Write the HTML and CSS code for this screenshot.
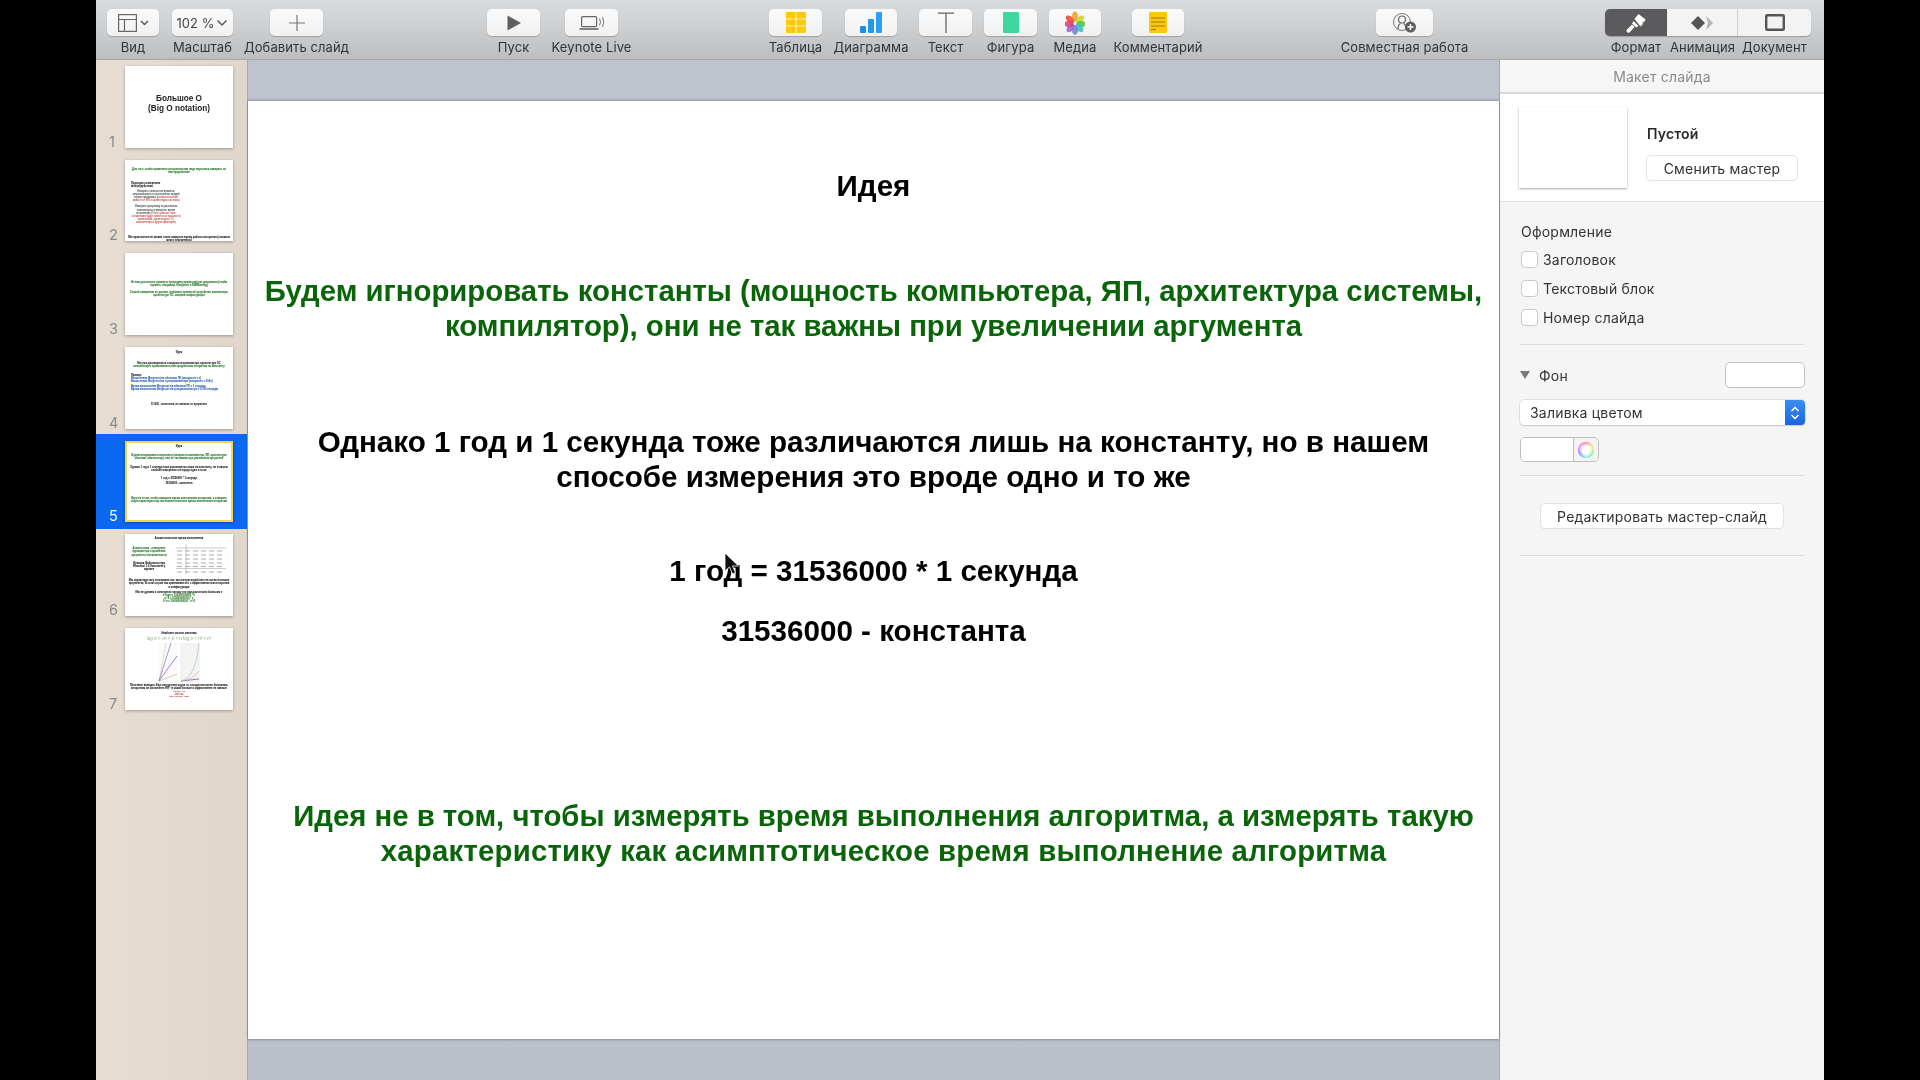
FILE: index.html
```html
<!DOCTYPE html>
<html lang="ru">
<head>
<meta charset="utf-8">
<title>Keynote</title>
<link rel="stylesheet" href="styles.css">
</head>
<body>
<div class="app">
  <header class="toolbar">
    <div class="tool w52 first"><div class="btn"><svg width="36" height="20" viewBox="0 0 36 20"><g fill="none" stroke="#666" stroke-width="1.2"><rect x="3.6" y="1.6" width="17.8" height="16.8"/><path d="M3.6 6.5h17.8M9.5 6.5v12"/></g><path d="M26 8l3.5 3.5L33 8" fill="none" stroke="#555" stroke-width="1.4"/></svg></div><span class="lbl">Вид</span></div>
    <div class="tool w61 m13"><div class="btn zoomtxt">102 %<svg width="12" height="8" viewBox="0 0 12 8"><path d="M1.5 1.5L6 6l4.5-4.5" fill="none" stroke="#555" stroke-width="1.4"/></svg></div><span class="lbl">Масштаб</span></div>
    <div class="tool w53 m37"><div class="btn"><svg width="20" height="20" viewBox="0 0 20 20"><path d="M10 2v16M2 10h16" stroke="#777" stroke-width="1.2"/></svg></div><span class="lbl">Добавить слайд</span></div>
    <div class="tool w53 m164"><div class="btn"><svg width="16" height="18" viewBox="0 0 16 18"><path d="M1.5 1.5L15 9 1.5 16.5z" fill="#5f5f5f"/></svg></div><span class="lbl">Пуск</span></div>
    <div class="tool w53 m25"><div class="btn"><svg width="28" height="18" viewBox="0 0 28 18"><rect x="3.6" y="2.6" width="15" height="10" rx="1" fill="none" stroke="#666" stroke-width="1.2"/><path d="M1.5 15h19" stroke="#666" stroke-width="1.6"/><path d="M21.5 4.5q2 3.5 0 7M24.5 3q2.6 5 0 10" fill="none" stroke="#777" stroke-width="1"/></svg></div><span class="lbl">Keynote Live</span></div>
    <div class="tool w53 m151"><div class="btn"><svg width="20" height="21" viewBox="0 0 20 21"><rect width="20" height="21" rx="1" fill="#fdc90f"/><path d="M0 7h20M0 14h20M10 0v21" stroke="#fff2b5" stroke-width="1"/></svg></div><span class="lbl">Таблица</span></div>
    <div class="tool w52 m23"><div class="btn"><svg width="22" height="21" viewBox="0 0 22 21"><rect x="0" y="14" width="6" height="7" rx="1" fill="#1a8ee8"/><rect x="8" y="7" width="6" height="14" rx="1" fill="#2497ef"/><rect x="16" y="0" width="6" height="21" rx="1" fill="#2b9ff5"/></svg></div><span class="lbl">Диаграмма</span></div>
    <div class="tool w53 m22"><div class="btn"><svg width="18" height="21" viewBox="0 0 18 21"><path d="M1 1.2h16M9 1.2V21" stroke="#666" stroke-width="1.3"/></svg></div><span class="lbl">Текст</span></div>
    <div class="tool w53 m12"><div class="btn"><svg width="16" height="21" viewBox="0 0 16 21"><rect width="16" height="21" rx="1" fill="#3ed79d"/></svg></div><span class="lbl">Фигура</span></div>
    <div class="tool w52 m12"><div class="btn"><svg width="20" height="24" viewBox="-10 -12 20 24"><g fill-opacity=".88"><ellipse cy="-6.5" rx="3" ry="5" fill="#f0a020"/><ellipse cx="5" cy="-3.5" rx="3" ry="5" transform="rotate(50 5 -3.5)" fill="#c8d42a"/><ellipse cx="6" cy="1" rx="3" ry="4.5" transform="rotate(90 6 1)" fill="#58c04a"/><ellipse cx="4.5" cy="5" rx="3" ry="5" transform="rotate(140 4.5 5)" fill="#3cc0c0"/><ellipse cy="7" rx="3" ry="5" fill="#6a84d8"/><ellipse cx="-4.5" cy="5" rx="3" ry="5" transform="rotate(40 -4.5 5)" fill="#a060c8"/><ellipse cx="-6" cy="1" rx="3" ry="4.5" transform="rotate(90 -6 1)" fill="#d8408a"/><ellipse cx="-5" cy="-3.5" rx="3" ry="5" transform="rotate(-50 -5 -3.5)" fill="#e84838"/></g></svg></div><span class="lbl">Медиа</span></div>
    <div class="tool w52 m31"><div class="btn"><svg width="18" height="21" viewBox="0 0 18 21"><rect width="18" height="21" rx="1" fill="#fdc70c"/><path d="M2 6h14M2 10h14M2 14h14M2 17.500h5" stroke="#9a7a1a" stroke-width="1"/></svg></div><span class="lbl">Комментарий</span></div>
    <div class="tool w57 m192"><div class="btn"><svg width="24" height="22" viewBox="0 0 24 22"><circle cx="9" cy="10" r="8.500" fill="none" stroke="#777" stroke-width="1"/><circle cx="9" cy="7.500" r="3.500" fill="none" stroke="#666" stroke-width="1.2"/><path d="M5 17.500q0-5 2.500-6M13 17.500q0-5-2.500-6" fill="none" stroke="#666" stroke-width="1.2"/><circle cx="17.500" cy="15" r="5.500" fill="#5d5d5d"/><path d="M17.500 12v6M14.500 15h6" stroke="#fff" stroke-width="1.4"/></svg></div><span class="lbl">Совместная работа</span></div>
    <div class="segs">
      <div class="tool w62"><div class="btn seg seg-on"><svg width="20" height="20" viewBox="0 0 20 20"><path d="M8.500 6l4-5 7 5.500-1.500 3-1.500-1 .5 2.500-2.500 2.500z" fill="#fff"/><path d="M7.500 8l5 5-2.500 1.500-4-4z" fill="#fff"/><path d="M6 11.500l2.500 2.500-4.500 5a1.900 1.900 0 0 1-3-2.500z" fill="#fff"/></svg></div><span class="lbl">Формат</span></div>
      <div class="tool w71"><div class="btn seg seg-mid"><svg width="22" height="14" viewBox="0 0 22 14"><path d="M7 0l7 7-7 7-7-7z" fill="#555"/><path d="M15 0l7 7-7 7 2-7z" fill="#b4b4b4"/></svg></div><span class="lbl">Анимация</span></div>
      <div class="tool w73"><div class="btn seg seg-end"><svg width="20" height="17" viewBox="0 0 20 17"><rect x="1.200" y="1.200" width="17.600" height="14.600" rx="1" fill="none" stroke="#555" stroke-width="2.400"/></svg></div><span class="lbl">Документ</span></div>
    </div>
  </header>

  <div class="main">
    <aside class="sidebar">
      <div class="row"><span class="num">1</span><div class="thumb t1"><p>Большое О</p><p>(Big O notation)</p></div></div>

      <div class="row"><span class="num">2</span><div class="thumb tx">
        <p class="g c mt8">Для того, чтобы применять алгоритмы нам надо научиться измерять их быстродействие</p>
        <div class="half mt8">
          <p class="k">Подходы к измерению быстродействия</p>
          <p class="n c mt2">Измерить количество времени, затрачиваемое на выполнение каждой строки программы <span class="r">(разные значения зависят от ЯП и архитектуры системы)</span></p>
          <p class="n c mt3">Измерить программу на различных компьютерах и измерить время исполнения <span class="r">(Опять разные типы алгоритмов будут зависеть от мощности компьютера, архитектуры ОС, компилятора и других факторов)</span></p>
        </div>
        <p class="k c mt12">Мы практически не можем точно измерить время работы алгоритма (слишком много переменных)</p>
      </div></div>

      <div class="row"><span class="num">3</span><div class="thumb tx">
        <p class="g c mt28">Но нам достаточно сравнить программу время работы программы (чтобы оценить, например, Mergesort и SMBSorting)</p>
        <p class="g c mt3">Способ измерения не должен требовать знания об устройстве компьютера, архитектуре ОС, мощной конфигурации</p>
      </div></div>

      <div class="row"><span class="num">4</span><div class="thumb tx">
        <p class="k c mt4">Идея</p>
        <p class="k c mt8">Мы уже договорились о мощности компьютера, архитектуре ОС</p>
        <p class="g c">компилятор и применяемого быстродействия алгоритма на константу</p>
        <p class="k mt6 lft">Пример:</p>
        <p class="b lft">Вычисление Mergesort на обычном ПК (мощность = x)</p>
        <p class="b lft">Вычисление Mergesort на суперкомпьютере (мощность = 100x)</p>
        <p class="b lft mt1">Время вычисления Mergesort на обычном ПК = 1 секунда</p>
        <p class="b lft">Время вычисления Mergesort на суперкомпьютере = 1/100 секунды</p>
        <p class="k c mt12">1/1000 - константа, не зависит от аргумента</p>
      </div></div>

      <div class="row sel"><span class="num">5</span><div class="thumb tx on">
        <p class="k c mt4">Идея</p>
        <p class="g c mt6">Будем игнорировать константы (мощность компьютера, ЯП, архитектура системы, компилятор), они не так важны при увеличении аргумента</p>
        <p class="k c mt6">Однако 1 год и 1 секунда тоже различаются лишь на константу, но в нашем способе измерения это вроде одно и то же</p>
        <p class="k c mt5">1 год = 31536000 * 1 секунда</p>
        <p class="k c mt2">31536000 - константа</p>
        <p class="g c mt12">Идея не в том, чтобы измерять время выполнения алгоритма, а измерять такую характеристику как асимптотическое время выполнение алгоритма</p>
      </div></div>

      <div class="row"><span class="num">6</span><div class="thumb tx">
        <p class="k c mt3">Асимптотическое время выполнения</p>
        <div class="cols mt4">
          <div>
            <p class="g c mt3">Асимптотика - поведение функции при стремлении аргумента к бесконечности</p>
            <p class="k c mt5">Функция Фибоначчи при Fibonacci 1.6 Экспоненту заранее</p>
          </div>
          <svg class="tbl" viewBox="0 0 50 30"><g stroke="#999" stroke-width=".5"><path d="M0 4h50M0 24.500h50M10 0v30"/></g><g stroke="#999" stroke-width=".8" stroke-dasharray="5 3"><path d="M1 7h48M1 11h48M1 15h48M1 19h48M1 22.500h48M1 28h48"/></g></svg>
        </div>
        <p class="k c mt5">Мы характеристику описываем так, как алгоритм работает на очень больших аргументах. В этом случае мы сравниваем его с эффективностью алгоритма и конфигурации</p>
        <p class="k c mt2">Мы не думаем о константах потому что при достаточно большом n</p>
        <p class="g c">n*logn = 100000000000 * n</p>
        <p class="g c">n^2 = 100000000000 * n</p>
        <p class="g c">2^n = 100000000000 * n^2</p>
      </div></div>

      <div class="row"><span class="num">7</span><div class="thumb tx">
        <p class="k c mt4">Наиболее частые значения</p>
        <p class="fm c">log n &lt; √n &lt; n &lt; n·log n &lt; n² &lt; n³</p>
        <svg class="chart" viewBox="0 0 46 40"><rect x="2" width="20" height="40" fill="#fbfbfb"/><rect x="24" width="20" height="40" fill="#f2f3f3"/><g fill="none" stroke-width=".7"><path d="M3 38L10 0" stroke="#c5d8a8"/><path d="M3 38L15 0" stroke="#9860c0"/><path d="M3 38L21 13" stroke="#6a50c8"/><path d="M3 38L21 31" stroke="#c8bc80"/><path d="M25 38L43 36" stroke="#7040b0"/><path d="M25 38Q38 36 43 28" stroke="#d8b090"/><path d="M25 38Q40 34 43 0" stroke="#a8c8a8"/></g></svg>
        <p class="k c">Полезные выводы: Еще интересная штука то, алгоритмы очень большими, алгоритмы он экспоненте ЯП* те какой больше и эффективнее не зависит</p>
        <div class="reds">
          <p class="r c">log(4096) = 12</p>
          <p class="r c">√4096 = 64</p>
          <p class="r c">4096 = 4096</p>
          <p class="r c">4096 * log(4096) = 49152</p>
        </div>
      </div></div>
    </aside>

    <section class="canvas">
      <div class="slide">
        <p class="sl s1">Идея</p>
        <p class="sl s2 green">Будем игнорировать константы (мощность компьютера, ЯП, архитектура системы,<br>компилятор), они не так важны при увеличении аргумента</p>
        <p class="sl s3">Однако 1 год и 1 секунда тоже различаются лишь на константу, но в нашем<br>способе измерения это вроде одно и то же</p>
        <p class="sl s4">1 год = 31536000 * 1 секунда</p>
        <p class="sl s5">31536000 - константа</p>
        <p class="sl s6 green">Идея не в том, чтобы измерять время выполнения алгоритма, а измерять такую<br><span class="wide">характеристику как асимптотическое время выполнение алгоритма</span></p>
        <svg class="cursor" width="16" height="24" viewBox="0 0 16 24"><path d="M1 1v18l4.500-4 3 7 3-1.300-3-6.700h6z" fill="#111" stroke="#fff" stroke-width=".8"/></svg>
      </div>
    </section>

    <aside class="panel">
      <div class="p-head">Макет слайда</div>
      <div class="p-master">
        <div class="m-thumb"></div>
        <div class="m-info">
          <strong class="m-name">Пустой</strong>
          <div class="pbtn m-btn">Сменить мастер</div>
        </div>
      </div>
      <div class="p-body">
        <div class="p-title">Оформление</div>
        <label class="chk first-chk"><i class="box"></i>Заголовок</label>
        <label class="chk"><i class="box"></i>Текстовый блок</label>
        <label class="chk"><i class="box"></i>Номер слайда</label>
        <hr class="div d1">
        <div class="bg-row"><span class="tri"></span><span class="bg-lbl">Фон</span><span class="swatch"></span></div>
        <div class="select"><span>Заливка цветом</span><span class="stepper"><svg width="12" height="18" viewBox="0 0 12 18"><path d="M2.500 7L6 3.500 9.500 7M2.500 11L6 14.500 9.500 11" fill="none" stroke="#fff" stroke-width="1.500"/></svg></span></div>
        <div class="well"><span class="well-c"></span><span class="well-w"><i class="wheel"></i></span></div>
        <hr class="div d2">
        <div class="pbtn edit">Редактировать мастер-слайд</div>
        <hr class="div d3">
      </div>
    </aside>
  </div>
</div>
</body>
</html>
```

FILE: styles.css
```css
* { box-sizing: border-box; }
html, body { margin: 0; height: 100%; background: #000; overflow: hidden; }
p { margin: 0; }
body { font-family: "Inter", "Liberation Sans", sans-serif; color: #2b2b2b; }

.app { margin: 0 96px; width: 1728px; height: 1080px; display: flex; flex-direction: column; background: #f5f5f5; overflow: hidden; filter: blur(.35px); }

/* toolbar */
.toolbar { height: 60px; flex: none; display: flex; align-items: flex-start; padding: 9px 0 0 11px; background: linear-gradient(#d9dcde, #d0d3d5 35%, #bcbec0); border-bottom: 1px solid #a6a7a9; }
.tool { display: flex; flex-direction: column; align-items: center; flex: none; }
.w52 { width: 52px; } .w53 { width: 53px; } .w57 { width: 57px; } .w61 { width: 61px; } .w62 { width: 62px; } .w71 { width: 71px; } .w73 { width: 73px; }
.m12 { margin-left: 12px; } .m13 { margin-left: 13px; } .m22 { margin-left: 22px; } .m23 { margin-left: 23px; } .m25 { margin-left: 25px; } .m31 { margin-left: 31px; } .m37 { margin-left: 37px; } .m151 { margin-left: 151px; } .m164 { margin-left: 164px; } .m192 { margin-left: 192px; }
.btn { width: 100%; height: 27px; display: flex; align-items: center; justify-content: center; background: linear-gradient(#fafafa, #f1f1f1); border-radius: 5px; box-shadow: 0 1px 1px rgba(0,0,0,.22); }
.zoomtxt { font-size: 13px; gap: 2px; color: #444; }
.lbl { margin-top: 4px; font-size: 13px; line-height: 15px; white-space: nowrap; color: #333; letter-spacing: .1px; }
.segs { display: flex; margin-left: 172px; }
.seg { border-radius: 0; background: #f3f3f3; }
.seg-on { background: #5b5b5d; border-radius: 5px 0 0 5px; }
.seg-mid { border-right: 1px solid #d5d5d5; }
.seg-end { border-radius: 0 5px 5px 0; }

/* main */
.main { flex: 1; display: flex; min-height: 0; }

/* thumbnails */
.sidebar { width: 152px; flex: none; padding-top: 6px; display: flex; flex-direction: column; gap: 12px; background: linear-gradient(90deg, #e7ddd2, #e0d6cb); border-right: 1px solid #a9a9a9; }
.row { position: relative; height: 81.670px; padding-left: 29px; display: flex; }
.sel::before { content: ""; position: absolute; left: 0; right: 0; top: -7px; bottom: -7px; background: #0a69f0; }
.num { position: absolute; left: 13px; bottom: -2px; font-size: 14.500px; line-height: 16px; color: #8a8a88; }
.sel .num { color: #fff; }
.thumb { position: relative; width: 108px; height: 100%; background: #fff; box-shadow: 0 1px 3px rgba(0,0,0,.3); overflow: hidden; }
.on { outline: 2px solid #f6d64c; outline-offset: -2px; }
.t1 { padding-top: 27.500px; text-align: center; font-size: 8.200px; line-height: 10px; font-family: "Liberation Sans", sans-serif; font-weight: 700; color: #222; }
.tx { font-family: "Liberation Sans", sans-serif; font-size: 2.600px; line-height: 3.100px; padding: 0 3px; font-weight: 700; color: #111; text-shadow: 0 0 .8px rgba(90,90,90,.35); }
.g { color: #1d7a1d; } .r { color: #c43c30; } .k { color: #111; } .n { color: #333; font-weight: 400; } .b { color: #2a60c0; }
.c { text-align: center; }
.lft { padding-left: 3px; }
.mt1 { margin-top: 1px; } .mt2 { margin-top: 2px; } .mt3 { margin-top: 3px; } .mt4 { margin-top: 4px; } .mt5 { margin-top: 5px; } .mt6 { margin-top: 6px; } .mt8 { margin-top: 8px; } .mt12 { margin-top: 12px; } .mt28 { margin-top: 28px; }
.half { width: 52%; padding-left: 3px; }
.cols { display: grid; grid-template-columns: 42px 1fr; gap: 6px; }
.tbl { width: 50px; height: 30px; display: block; }
.fm { font-size: 4.500px; line-height: 6px; color: #a8cc9c; margin-top: 1px; font-weight: 400; }
.chart { display: block; width: 46px; height: 40px; margin: 1px auto 1px; }
.reds { font-size: 1.700px; line-height: 1.600px; margin-top: 1px; }

/* canvas and slide */
.canvas { flex: 1; min-width: 0; padding-top: 41px; background: linear-gradient(#bcc3cd, #b9c0ca); }
.slide { position: relative; height: 938px; padding-top: 67px; background: #fff; box-shadow: 0 -1px 2px rgba(70,70,80,.35), 0 1px 2px rgba(70,70,80,.4); }
.sl { font-family: "Liberation Sans", sans-serif; font-size: 29.600px; line-height: 35.500px; font-weight: 700; text-align: center; color: #000; white-space: nowrap; }
.green { font-size: 29.350px; color: #0a650a; }
.wide { letter-spacing: .22px; }
.s2 { margin-top: 69px; } .s3 { margin-top: 80px; } .s4 { margin-top: 58px; } .s5 { margin-top: 25px; } .s6 { margin-top: 149px; padding-left: 20px; }
.cursor { position: absolute; left: 476px; top: 451px; }

/* inspector */
.panel { width: 325px; flex: none; border-left: 1px solid #a9a9a9; background: #f5f5f5; font-size: 14px; letter-spacing: .2px; color: #333; }
.p-head { height: 34px; display: flex; align-items: center; justify-content: center; color: #8a8a8a; background: #f6f6f6; border-bottom: 2px solid #d6d6da; }
.p-master { height: 108px; padding: 13px 0 0 19px; display: flex; background: #fff; border-bottom: 1px solid #e2e2e2; }
.m-thumb { width: 108px; height: 81px; background: #fff; box-shadow: 0 1px 2px rgba(0,0,0,.35); }
.m-info { margin-left: 20px; padding-top: 19px; }
.m-name { display: block; font-weight: 600; line-height: 16px; color: #2a2a2a; }
.pbtn { display: flex; align-items: center; justify-content: center; height: 24px; background: #fff; border-radius: 4px; box-shadow: 0 0 0 1px #e2e2e2, 0 1px 1px rgba(0,0,0,.12); color: #333; }
.m-btn { width: 150px; margin-top: 14px; }
.p-body { padding: 21px 19px 0 20px; }
.p-title { line-height: 18px; margin-left: 1px; }
.chk { display: flex; align-items: center; height: 17px; margin: 12px 0 0 1px; }
.first-chk { margin-top: 10px; }
.box { width: 17px; height: 17px; margin-right: 5px; background: #fff; border: 1px solid #c9c9c9; border-radius: 4px; }
.div { height: 1px; margin: 0; border: 0; background: #dedede; }
.d1 { margin-top: 18px; }
.d2 { margin-top: 13px; }
.d3 { margin-top: 27px; }
.bg-row { display: flex; align-items: center; height: 26px; margin-top: 17px; }
.tri { width: 0; height: 0; border-left: 5px solid transparent; border-right: 5px solid transparent; border-top: 8px solid #777; }
.bg-lbl { margin-left: 9px; }
.swatch { width: 80px; height: 26px; margin-left: auto; background: #fff; border: 1px solid #c2c2c2; border-radius: 5px; }
.select { display: flex; justify-content: space-between; align-items: center; height: 25px; margin-top: 12px; padding-left: 10px; background: #fff; border-radius: 4px; box-shadow: 0 0 0 .5px #ccc, 0 1px 1px rgba(0,0,0,.2); }
.stepper { width: 20px; height: 25px; display: flex; align-items: center; justify-content: center; background: linear-gradient(#3a8df5, #1a66dc); border-radius: 0 4px 4px 0; }
.well { display: flex; width: 79px; height: 25px; margin-top: 12px; border: 1px solid #bdbdbd; border-radius: 5px; overflow: hidden; }
.well-c { width: 53px; background: #fff; border-right: 1px solid #bdbdbd; }
.well-w { flex: 1; display: flex; align-items: center; justify-content: center; background: #f4f4f4; }
.wheel { width: 16px; height: 16px; border-radius: 50%; background: radial-gradient(circle, #fff 35%, transparent 75%), conic-gradient(#f66, #fd6, #6e6, #6ee, #66f, #e6e, #f66); }
.edit { width: 242px; margin: 28px 0 0 21px; }
```
